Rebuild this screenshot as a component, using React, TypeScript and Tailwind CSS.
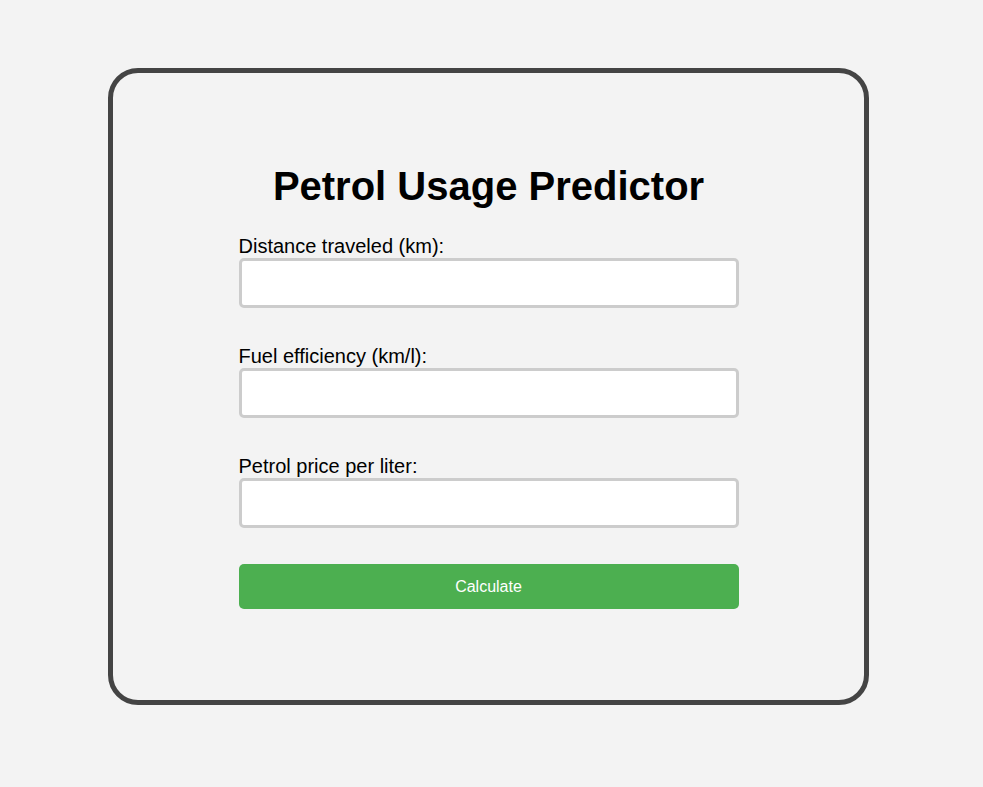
import React from "react";

function Field({ label }: { label: string }) {
  return (
    <div className="flex flex-col">
      <label className="text-[20px] leading-[23px] text-black">{label}</label>
      <input
        type="text"
        className="h-[50px] w-full rounded-[5px] border-[3px] border-[#cccccc] bg-white px-2 outline-none"
      />
    </div>
  );
}

export default function App() {
  return (
    <div className="flex min-h-[787px] justify-center bg-[#f3f3f3] pr-[6px] pt-[68px] font-['Liberation_Sans',Arial,sans-serif]">
      <div className="h-[637px] w-[761px] rounded-[30px] border-[5px] border-[#444444] pt-[90px]">
        <div className="mx-auto flex w-[500px] flex-col">
          <h1 className="text-center text-[40px] font-bold leading-[46px] text-black">
            Petrol Usage Predictor
          </h1>
          <div className="mt-[26px] flex flex-col gap-[37px]">
            <Field label="Distance traveled (km):" />
            <Field label="Fuel efficiency (km/l):" />
            <Field label="Petrol price per liter:" />
          </div>
          <button className="mt-[36px] h-[45px] w-full rounded-[5px] bg-[#4caf50] text-[16px] text-white">
            Calculate
          </button>
        </div>
      </div>
    </div>
  );
}
